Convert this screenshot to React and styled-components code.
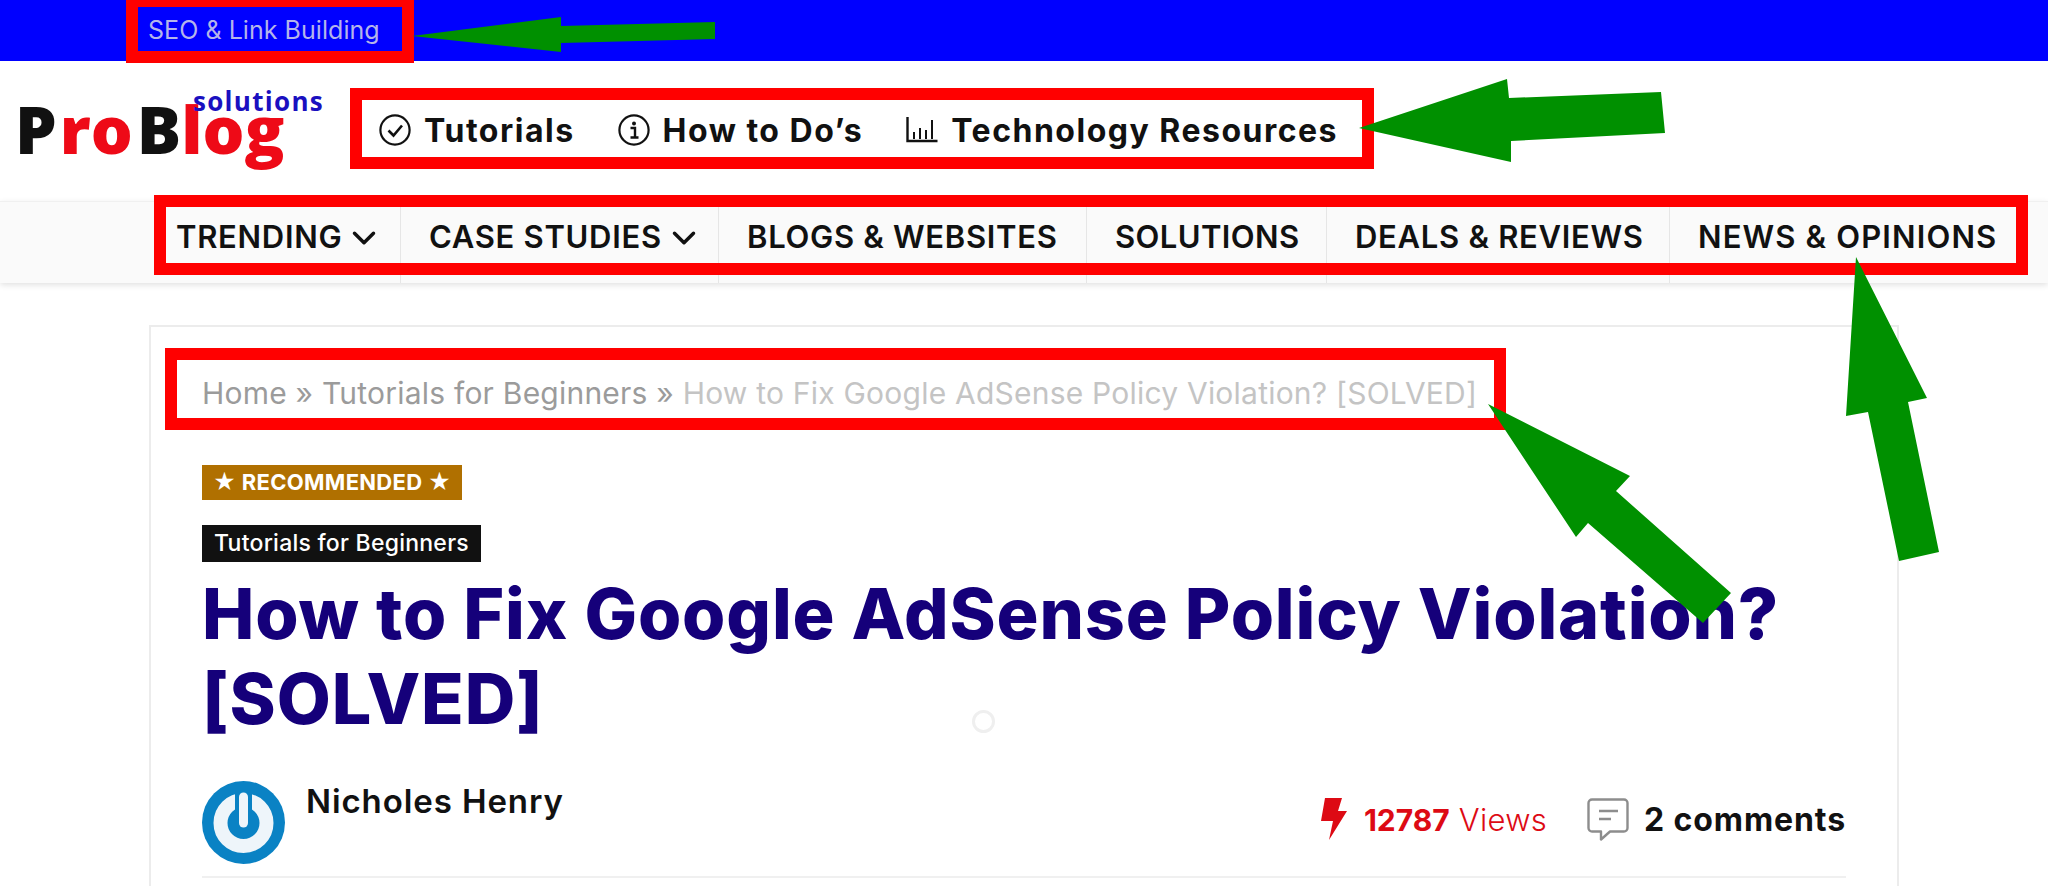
import React from 'react';
import styled, { createGlobalStyle } from 'styled-components';
import { ChevronDown } from 'lucide-react';

const GlobalStyle = createGlobalStyle`
  html, body {
    margin: 0;
    padding: 0;
    background: #fff;
    height: 886px;
    overflow: hidden;
  }
  body {
    font-family: "Inter", "Liberation Sans", sans-serif;
    color: #111;
  }
`;

const Page = styled.div`
  position: relative;
  width: 2048px;
  height: 886px;
  overflow: hidden;
`;

const TopBar = styled.div`
  height: 61px;
  background: #0000ff;
  display: flex;
  align-items: center;
  padding: 0 0 2px 148px;
  box-sizing: border-box;
`;

const TopLink = styled.a`
  font-size: 25px;
  color: #b4b4ea;
  letter-spacing: 0.05px;
`;

const Header = styled.div`
  height: 140px;
  display: flex;
  align-items: center;
`;

const Logo = styled.div`
  position: relative;
  width: 379px;
  padding: 0 0 6px 15px;
  box-sizing: border-box;
  font-family: "Open Sans", sans-serif;
  font-weight: 800;
  font-size: 66px;
  line-height: 80px;
  white-space: nowrap;
`;

const LogoPart = styled.span`
  color: ${p => (p.$red ? '#ee0a17' : '#111')};
  margin-left: ${p => p.$gap || 0}px;
`;

const LogoTag = styled.span`
  position: absolute;
  left: 193px;
  top: -2px;
  font-size: 26px;
  font-weight: 700;
  line-height: 30px;
  letter-spacing: 1.3px;
  color: #1a10c0;
`;

const SubMenu = styled.div`
  display: flex;
  align-items: center;
  padding-bottom: 2px;
`;

const SubLink = styled.a`
  display: flex;
  align-items: center;
  gap: 13px;
  margin-right: ${p => p.$gap}px;
  font-size: 32px;
  font-weight: 700;
  color: #111;
  white-space: nowrap;
  letter-spacing: 1.5px;
`;

const Nav = styled.div`
  height: 82px;
  display: flex;
  padding-left: 148px;
  background: #fafafa;
  border-top: 1px solid #f0f0f0;
  box-shadow: 0 2px 6px rgba(0, 0, 0, 0.12);
  box-sizing: border-box;
`;

const NavItem = styled.a`
  width: ${p => p.$w}px;
  box-sizing: border-box;
  padding: 0 0 12px 28px;
  display: flex;
  align-items: center;
  gap: 3px;
  font-size: 31px;
  font-weight: 600;
  color: #111;
  white-space: nowrap;
  letter-spacing: ${p => p.$ls || 0.7}px;
  border-right: ${p => (p.$last ? 'none' : '1px solid #e6e6e6')};
`;

const Chevron = styled(ChevronDown)`
  margin-top: 3px;
`;

const Card = styled.div`
  margin: 42px 0 0 149px;
  width: 1750px;
  height: 600px;
  box-sizing: border-box;
  border: 2px solid #ececec;
  padding: 44px 51px 0;
`;

const Crumbs = styled.div`
  font-size: 30px;
  line-height: 44px;
  color: #9b9b9b;
  white-space: nowrap;
  letter-spacing: 0.22px;
`;

const CrumbCurrent = styled.span`
  color: #c4c4c4;
`;

const Tag = styled.div`
  display: table;
  height: ${p => p.$h}px;
  line-height: ${p => p.$h}px;
  margin-top: ${p => p.$mt}px;
  padding: 0 ${p => p.$pad}px;
  background: ${p => p.$bg};
  color: #fff;
  font-size: ${p => p.$size}px;
  font-weight: ${p => p.$weight};
  letter-spacing: ${p => p.$ls}px;
  white-space: nowrap;
`;

const Title = styled.h1`
  margin: 9px 0 0;
  font-size: 70px;
  line-height: 85px;
  font-weight: 800;
  color: #15007a;
  letter-spacing: 0.85px;
`;

const Meta = styled.div`
  display: flex;
  justify-content: space-between;
  margin-top: 40px;
  padding-bottom: 12px;
  border-bottom: 2px solid #f0f0f0;
`;

const Author = styled.div`
  display: flex;
  gap: 21px;
  align-items: flex-start;
`;

const AuthorName = styled.div`
  font-size: 33px;
  font-weight: 600;
  line-height: 40px;
  letter-spacing: 0.9px;
  color: #111;
`;

const Stats = styled.div`
  display: flex;
  align-items: center;
  gap: 40px;
  height: 60px;
  margin-top: 8px;
`;

const Stat = styled.div`
  display: flex;
  align-items: center;
  gap: ${p => p.$gap}px;
  color: ${p => p.$color};
`;

const Views = styled.span`
  font-size: 30px;
`;

const ViewsLight = styled.span`
  font-weight: 300;
  margin-left: 9px;
  letter-spacing: 0.3px;
  font-size: 31px;
`;

const StatNumber = styled.b`
  font-weight: 700;
`;

const Comments = styled.b`
  font-size: 32px;
  font-weight: 700;
  letter-spacing: 0.9px;
`;

const Spinner = styled.div`
  position: absolute;
  left: 972px;
  top: 710px;
  width: 17px;
  height: 17px;
  border: 3px solid #efefef;
  border-radius: 50%;
  background: #fff;
`;

const Marks = styled.svg`
  position: absolute;
  left: 0;
  top: 0;
  pointer-events: none;
`;

const CheckIcon = () => (
  <svg width="32" height="32" viewBox="0 0 32 32" fill="none" stroke="#111" strokeWidth="2.2">
    <circle cx="16" cy="16" r="14.6" />
    <path d="M9.5 16.5l5 5 8.5-10" strokeWidth="2.6" />
  </svg>
);

const InfoIcon = () => (
  <svg width="32" height="32" viewBox="0 0 32 32" fill="none" stroke="#111" strokeWidth="2.2">
    <circle cx="16" cy="16" r="14.6" />
    <circle cx="16" cy="9.5" r="2" fill="#111" stroke="none" />
    <path d="M12.5 14h4.5v9M12.5 23.5h8" strokeWidth="2.4" />
  </svg>
);

const ChartIcon = () => (
  <svg width="32" height="26" viewBox="0 0 32 26" fill="none" stroke="#111" strokeWidth="2">
    <path d="M1.5 0v24h30" strokeWidth="2.4" />
    <path d="M8 22v-7M14 22v-11M20 22v-9M26 22V3" />
  </svg>
);

const BoltIcon = () => (
  <svg width="26" height="42" viewBox="0 0 26 42" fill="#dd0a14">
    <path d="M4 0h17l-4 13h9L8 42l4-19H0z" />
  </svg>
);

const CommentIcon = () => (
  <svg width="42" height="43" viewBox="0 0 42 43" fill="none" stroke="#8d8d8d" strokeWidth="2.4" strokeLinejoin="round">
    <path d="M5 1.5h32a3.5 3.5 0 0 1 3.5 3.5v25a3.5 3.5 0 0 1-3.5 3.5H23l-9 8v-8H5A3.5 3.5 0 0 1 1.5 30V5A3.5 3.5 0 0 1 5 1.5z" />
    <path d="M12 13h19M12 21h12" />
  </svg>
);

const AvatarIcon = () => (
  <svg width="83" height="83" viewBox="0 0 83 83">
    <circle cx="41.5" cy="41.5" r="41.5" fill="#0a82c4" />
    <circle cx="41.5" cy="42" r="23" fill="none" stroke="#eef5fa" strokeWidth="14" />
    <path d="M41.5 8v34" stroke="#0a82c4" strokeWidth="17" />
    <path d="M41.5 16v26" stroke="#eef5fa" strokeWidth="9" strokeLinecap="round" />
  </svg>
);

const navItems = [
  { label: 'TRENDING', w: 253, chevron: true },
  { label: 'CASE STUDIES', w: 318, chevron: true },
  { label: 'BLOGS & WEBSITES', w: 368 },
  { label: 'SOLUTIONS', w: 240, ls: 0.4 },
  { label: 'DEALS & REVIEWS', w: 343 },
  { label: 'NEWS & OPINIONS', w: 340, ls: 1.15, last: true },
];

const redBoxes = [
  [132, 1, 276, 56],
  [356, 94, 1012, 69],
  [160, 201, 1862, 68],
  [171, 354, 1329, 70],
];

const arrows = [
  '412,36 561,17 561,26 715,22 715,39 561,43 561,52',
  '1359,128 1507,79 1509,98 1661,92 1665,133 1511,141 1511,162',
  '1488,404 1630,476 1616,491 1731,593 1703,623 1588,523 1576,537',
  '1856,257 1927,398 1908,402 1939,552 1899,561 1868,412 1846,416',
];

export default function App() {
  return (
    <Page>
      <GlobalStyle />
      <TopBar>
        <TopLink>SEO &amp; Link Building</TopLink>
      </TopBar>
      <Header>
        <Logo>
          <LogoPart>P</LogoPart>
          <LogoPart $red $gap={3}>ro</LogoPart>
          <LogoPart $gap={4}>B</LogoPart>
          <LogoPart $red>log</LogoPart>
          <LogoTag>solutions</LogoTag>
        </Logo>
        <SubMenu>
          <SubLink $gap={43}><CheckIcon />Tutorials</SubLink>
          <SubLink $gap={43}><InfoIcon />How to Do’s</SubLink>
          <SubLink $gap={0}><ChartIcon />Technology Resources</SubLink>
        </SubMenu>
      </Header>
      <Nav>
        {navItems.map(item => (
          <NavItem key={item.label} $w={item.w} $ls={item.ls} $last={item.last}>
            {item.label}
            {item.chevron && <Chevron size={38} strokeWidth={2.2} />}
          </NavItem>
        ))}
      </Nav>
      <Card>
        <Crumbs>
          Home » Tutorials for Beginners » <CrumbCurrent>How to Fix Google AdSense Policy Violation? [SOLVED]</CrumbCurrent>
        </Crumbs>
        <Tag $h={35} $mt={50} $pad={11} $bg="#b07000" $size={22} $weight={700} $ls={0.3}>★ RECOMMENDED ★</Tag>
        <Tag $h={37} $mt={25} $pad={12} $bg="#111" $size={23} $weight={500} $ls={0.25}>Tutorials for Beginners</Tag>
        <Title>How to Fix Google AdSense Policy Violation? [SOLVED]</Title>
        <Meta>
          <Author>
            <AvatarIcon />
            <AuthorName>Nicholes Henry</AuthorName>
          </Author>
          <Stats>
            <Stat $gap={17} $color="#dd0a14">
              <BoltIcon />
              <Views><StatNumber>12787</StatNumber><ViewsLight>Views</ViewsLight></Views>
            </Stat>
            <Stat $gap={15} $color="#111">
              <CommentIcon />
              <Comments>2 comments</Comments>
            </Stat>
          </Stats>
        </Meta>
      </Card>
      <Spinner />
      <Marks width="2048" height="886">
        {redBoxes.map(([x, y, w, h]) => (
          <rect key={x} x={x} y={y} width={w} height={h} fill="none" stroke="#ff0000" strokeWidth="12" />
        ))}
        {arrows.map(points => (
          <polygon key={points} points={points} fill="#009000" />
        ))}
      </Marks>
    </Page>
  );
}
